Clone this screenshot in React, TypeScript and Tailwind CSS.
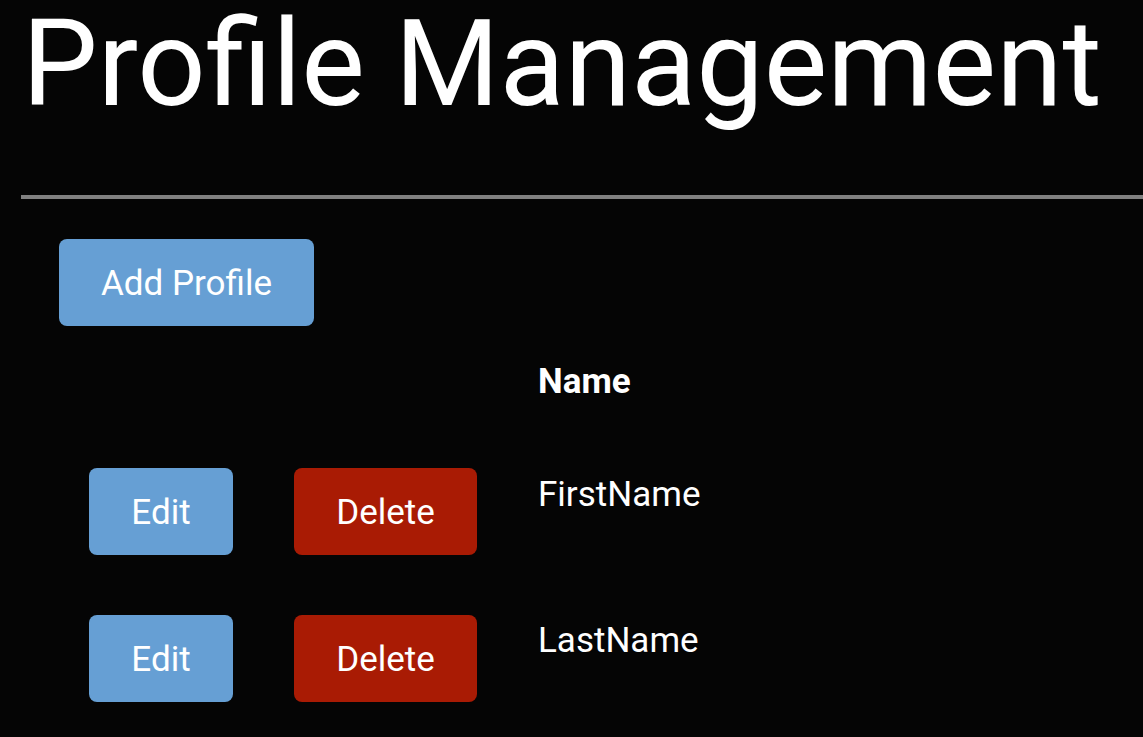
const rows = ['FirstName', 'LastName'];

export default function App() {
  return (
    <div className="min-h-screen bg-[#050505] text-white font-['Roboto',sans-serif] overflow-hidden">
      <div className="pl-[22px]">
        <h1 className="text-[120px] leading-[120px] font-normal mt-[4px] whitespace-nowrap">
          Profile Management
        </h1>
      </div>
      <div className="ml-[21px] mt-[71px] h-[4px] bg-[#808080]" />

      <div className="pl-[59px] pt-[40px]">
        <button className="h-[87px] w-[255px] rounded-[8px] bg-[#669fd4] pt-[2px] text-[35px] leading-[40px] text-white">
          Add Profile
        </button>
      </div>

      <div className="mt-[36px] grid grid-cols-[205px_244px_auto] pl-[89px] text-[35px] leading-[40px]">
        <div />
        <div />
        <div className="font-bold">Name</div>

        {rows.map((name, i) => (
          <div key={name} className="contents">
            <div className={i === 0 ? 'mt-[66px]' : 'mt-[60px]'}>
              <button className="h-[87px] w-[144px] rounded-[8px] bg-[#669fd4] pt-[2px] text-white">Edit</button>
            </div>
            <div className={i === 0 ? 'mt-[66px]' : 'mt-[60px]'}>
              <button className="h-[87px] w-[183px] rounded-[8px] bg-[#a91b04] pt-[2px] text-white">Delete</button>
            </div>
            <div className={i === 0 ? 'mt-[73px]' : 'mt-[66px]'}>{name}</div>
          </div>
        ))}
      </div>
    </div>
  );
}
